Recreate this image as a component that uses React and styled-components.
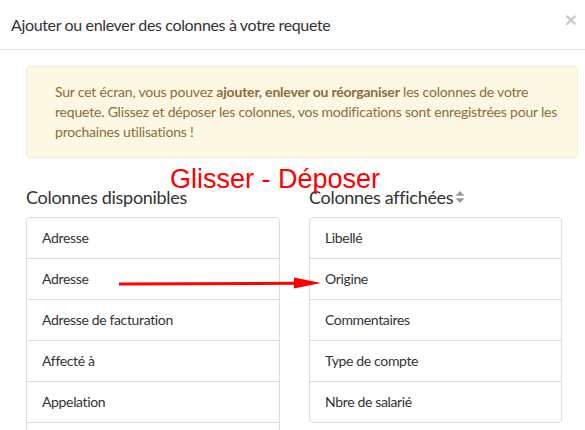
import styled, { createGlobalStyle } from "styled-components";

const GlobalStyle = createGlobalStyle`
  html, body {
    margin: 0;
    padding: 0;
    background: #fff;
    height: 430px;
    overflow: hidden;
  }
  body {
    font-family: Lato, "Liberation Sans", sans-serif;
    color: #333;
  }
`;

const available = [
  "Adresse",
  "Adresse",
  "Adresse de facturation",
  "Affecté à",
  "Appelation",
  "Catégorie",
  "Civilité",
];

const displayed = [
  "Libellé",
  "Origine",
  "Commentaires",
  "Type de compte",
  "Nbre de salarié",
];

export default function App() {
  return (
    <>
      <GlobalStyle />
      <Modal>
        <Header>
          <Title>Ajouter ou enlever des colonnes à votre requete</Title>
          <Close aria-label="Fermer">×</Close>
        </Header>
        <Body>
          <Alert>
            <Line>
              Sur cet écran, vous pouvez <b>ajouter, enlever ou réorganiser</b>{" "}
              les colonnes de votre
            </Line>
            <Line>
              requete. Glissez et déposer les colonnes, vos modifications sont
              enregistrées pour les
            </Line>
            <Line>prochaines utilisations !</Line>
          </Alert>
          <Columns>
            <Column>
              <Heading>Colonnes disponibles</Heading>
              <List>
                {available.map((label, i) => (
                  <Item key={i}>{label}</Item>
                ))}
              </List>
            </Column>
            <Column>
              <Heading>
                Colonnes affichées
                <SortIcon viewBox="0 0 10 14" aria-hidden="true">
                  <path d="M5 1 L9.5 5.8 H0.5 Z" />
                  <path d="M5 13 L9.5 8.2 H0.5 Z" />
                </SortIcon>
              </Heading>
              <List>
                {displayed.map((label, i) => (
                  <Item key={i}>{label}</Item>
                ))}
              </List>
            </Column>
            <DragHint>Glisser - Déposer</DragHint>
            <Arrow viewBox="0 0 210 12" aria-hidden="true">
              <line x1="3" y1="7" x2="182" y2="6.2" />
              <polygon points="178,0.5 205,6 178,11.5" />
            </Arrow>
          </Columns>
        </Body>
      </Modal>
    </>
  );
}

const Modal = styled.div`
  width: 100%;
  background: #fff;
`;

const Header = styled.div`
  display: flex;
  align-items: center;
  justify-content: space-between;
  height: 49px;
  padding: 0 8px 0 11px;
  border-bottom: 1px solid #e5e5e5;
`;

const Title = styled.h4`
  margin: 0;
  font-size: 16px;
  letter-spacing: -0.35px;
  font-weight: 400;
  color: #333;
  line-height: 1.1;
`;

const Close = styled.button`
  border: 0;
  background: none;
  padding: 0;
  margin-top: -10px;
  font-family: "Liberation Sans", sans-serif;
  font-size: 21px;
  font-weight: 700;
  line-height: 1;
  color: #000;
  opacity: 0.2;
  cursor: pointer;
`;

const Body = styled.div`
  padding: 16px 7px 0 26px;
`;

const Alert = styled.div`
  padding: 15px 20px 15px 28px;
  background: #fcf8e3;
  border: 1px solid #faebcc;
  border-radius: 4px;
  color: #8a6d3b;
  font-size: 14px;
  line-height: 20px;
  letter-spacing: -0.2px;
  b {
    font-weight: 700;
  }
`;

const Line = styled.span`
  display: block;
  white-space: nowrap;
`;

const Columns = styled.div`
  position: relative;
  display: grid;
  grid-template-columns: 254px 253px;
  column-gap: 29px;
  margin-top: 29px;
`;

const Column = styled.div``;

const Heading = styled.h4`
  display: flex;
  align-items: center;
  margin: 0 0 10px;
  font-size: 18px;
  font-weight: 400;
  letter-spacing: -0.3px;
  line-height: 20px;
  color: #333;
`;

const SortIcon = styled.svg`
  width: 10px;
  height: 14px;
  margin-left: 2px;
  fill: #999;
`;

const List = styled.div`
  border: 1px solid #ddd;
  border-radius: 4px;
`;

const Item = styled.div`
  padding: 10px 15px;
  font-size: 14px;
  line-height: 20px;
  letter-spacing: -0.35px;
  color: #333;
  & + & {
    border-top: 1px solid #ddd;
  }
`;

const DragHint = styled.div`
  position: absolute;
  left: 144px;
  top: -21px;
  font-family: "Liberation Sans", Arial, sans-serif;
  font-size: 27px;
  line-height: 27px;
  color: #f00;
  pointer-events: none;
`;

const Arrow = styled.svg`
  position: absolute;
  left: 90px;
  top: 90px;
  width: 210px;
  height: 12px;
  pointer-events: none;
  line {
    stroke: #f00;
    stroke-width: 3;
  }
  polygon {
    fill: #f00;
  }
`;
